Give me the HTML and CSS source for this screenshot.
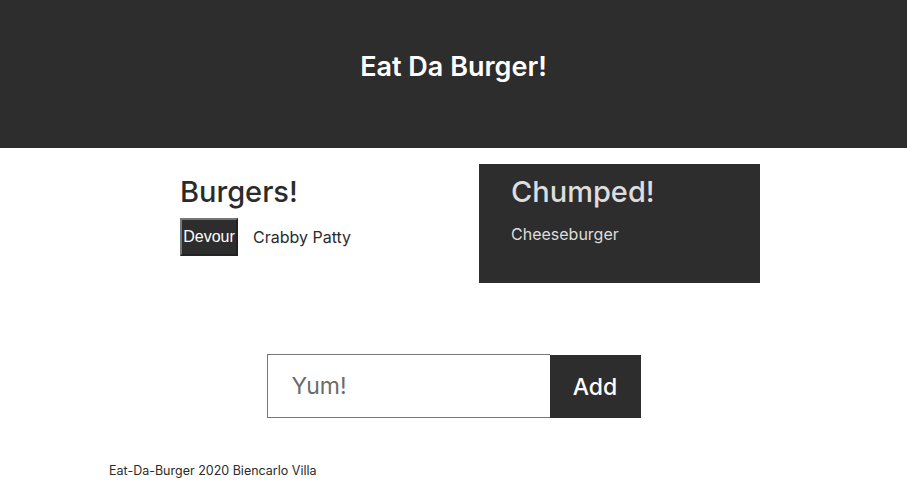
FILE: index.html
```html
<!DOCTYPE html>
<html>
<head>
<meta charset="utf-8">
<link rel="stylesheet" href="styles.css">
</head>
<body>
<header class="hero">
  <h1 class="hero-title">Eat Da Burger!</h1>
</header>
<main class="lists">
  <section class="col col-left">
    <h2 class="col-title">Burgers!</h2>
    <div class="item">
      <button class="devour">Devour</button>
      <span class="item-name">Crabby Patty</span>
    </div>
  </section>
  <section class="col col-dark">
    <h2 class="col-title light">Chumped!</h2>
    <p class="eaten">Cheeseburger</p>
  </section>
</main>
<form class="add-form">
  <input class="add-input" type="text" placeholder="Yum!">
  <button class="add-btn" type="button">Add</button>
</form>
<footer class="footer">Eat-Da-Burger 2020 Biencarlo Villa</footer>
</body>
</html>
```
FILE: styles.css
```css
html, body {
  margin: 0;
  padding: 0;
}
body {
  font-family: Inter, "Liberation Sans", sans-serif;
  color: #2b2b2b;
  background: #fff;
}
.hero {
  background: #2d2d2d;
  height: 148px;
  display: flex;
  align-items: center;
  justify-content: center;
}
.hero-title {
  margin: 0;
  color: #fff;
  font-size: 27px;
  font-weight: 600;
  padding-bottom: 16px;
}
.lists {
  display: flex;
  gap: 9px;
  margin: 16px 0 0 180px;
}
.col {
  width: 290px;
}
.col-left {
  padding-top: 10px;
}
.col-title {
  font-family: Inter, "Liberation Sans", Arial, sans-serif;
  font-weight: 500;
  font-size: 29px;
  margin: 0;
  line-height: 36px;
  color: #2b2b2b;
}
.item {
  display: flex;
  align-items: center;
  gap: 15px;
  margin-top: 8px;
}
.devour {
  font-family: "Liberation Sans", Arial, sans-serif;
  font-size: 16px;
  background: #2d2d2d;
  color: #fff;
  border: 2px outset #777;
  height: 38px;
  width: 58px;
  padding: 0;
}
.item-name {
  font-size: 16px;
  color: #2b2b2b;
}
.col-dark {
  background: #2d2d2d;
  width: 281px;
  height: 119px;
  box-sizing: border-box;
  padding: 10px 32px;
}
.col-title.light {
  color: #ddd;
}
.eaten {
  margin: 14px 0 0;
  color: #ddd;
  font-size: 16px;
}
.add-form {
  display: flex;
  justify-content: center;
  margin-top: 71px;
}
.add-input {
  width: 283px;
  height: 64px;
  box-sizing: border-box;
  border: 1px solid #777;
  border-right: none;
  padding: 0 24px;
  font-family: Inter, "Liberation Sans", sans-serif;
  font-size: 23px;
  outline: none;
}
.add-input::placeholder {
  color: #6b6b6b;
}
.add-btn {
  width: 91px;
  height: 63px;
  margin-top: 1px;
  background: #2d2d2d;
  color: #fff;
  border: none;
  font-family: Inter, "Liberation Sans", sans-serif;
  font-size: 23px;
  font-weight: 500;
}
.footer {
  margin: 45px 0 0 109px;
  font-size: 12.5px;
  color: #2b2b2b;
}
```
